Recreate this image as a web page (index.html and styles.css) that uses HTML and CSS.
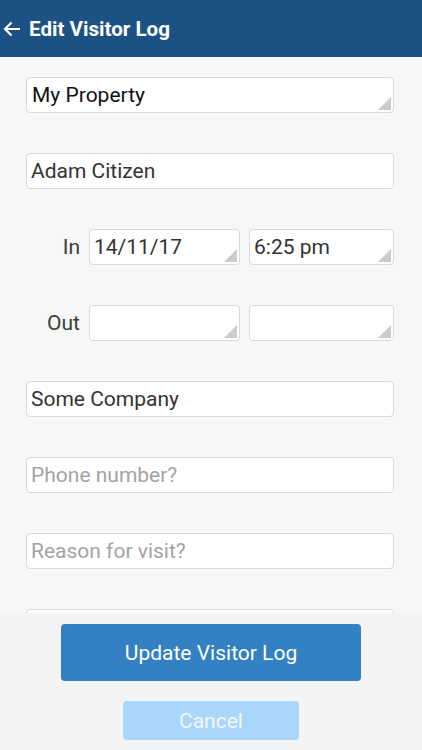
FILE: index.html
```html
<!DOCTYPE html>
<html>
<head>
<meta charset="utf-8">
<link rel="stylesheet" href="styles.css">
</head>
<body>
<div class="app">
  <header class="bar">
    <svg class="back" width="18" height="16" viewBox="0 0 18 16"><path d="M17 8H2M8.5 1.5L2 8l6.5 6.5" fill="none" stroke="#fff" stroke-width="2.2"/></svg>
    <span class="title">Edit Visitor Log</span>
  </header>
  <main class="form">
    <div class="field select dark">My Property</div>
    <div class="field">Adam Citizen</div>
    <div class="row">
      <span class="label">In</span>
      <div class="field select">14/11/17</div>
      <div class="field select">6:25 pm</div>
    </div>
    <div class="row">
      <span class="label">Out</span>
      <div class="field select"></div>
      <div class="field select"></div>
    </div>
    <div class="field">Some Company</div>
    <div class="field ph">Phone number?</div>
    <div class="field ph">Reason for visit?</div>
    <div class="field"></div>
  </main>
  <footer class="foot">
    <button class="btn primary">Update Visitor Log</button>
    <button class="btn cancel">Cancel</button>
  </footer>
</div>
</body>
</html>
```
FILE: styles.css
```css
* { box-sizing: border-box; }
html, body { margin: 0; padding: 0; }
body { font-family: Roboto, "Noto Sans", sans-serif; background: #f7f7f7; }
.app { height: 750px; display: flex; flex-direction: column; overflow: hidden; }
.bar { height: 57px; flex: none; background: #1c5283; display: flex; align-items: center; padding-left: 3px; color: #fff; }
.back { margin-right: 8px; margin-top: 1px; }
.title { font-weight: bold; font-size: 20.6px; }
.form { flex: 1; overflow: hidden; padding: 20px 28px 0 26px; display: flex; flex-direction: column; gap: 40px; background: #f7f7f7; }
.field { height: 36px; flex: none; background: #fff; border: 1px solid #d9d9d9; border-radius: 4px; font-size: 21px; color: #333; padding-left: 4px; display: flex; align-items: center; position: relative; }
.field.dark { color: #111; padding-left: 5px; }
.field.ph { color: #a3a3a3; }
.select::after { content: ""; position: absolute; right: 2px; bottom: 2px; width: 0; height: 0; border-style: solid; border-width: 0 0 13px 13px; border-color: transparent transparent #cbcbcb transparent; }
.row { display: grid; grid-template-columns: 54px 151px 1fr; column-gap: 9px; align-items: center; flex: none; }
.label { text-align: right; font-size: 21px; color: #3c3c3c; }
.foot { height: 137px; flex: none; background: #f4f4f4; display: flex; flex-direction: column; align-items: center; padding-top: 11px; gap: 20px; }
.btn { border: none; border-radius: 4px; font-family: Roboto, "Noto Sans", sans-serif; font-size: 21px; color: #fff; }
.primary { width: 300px; height: 57px; background: #3380c2; }
.cancel { width: 176px; height: 39px; background: #a9d6fb; color: #f2f8ff; }
```
